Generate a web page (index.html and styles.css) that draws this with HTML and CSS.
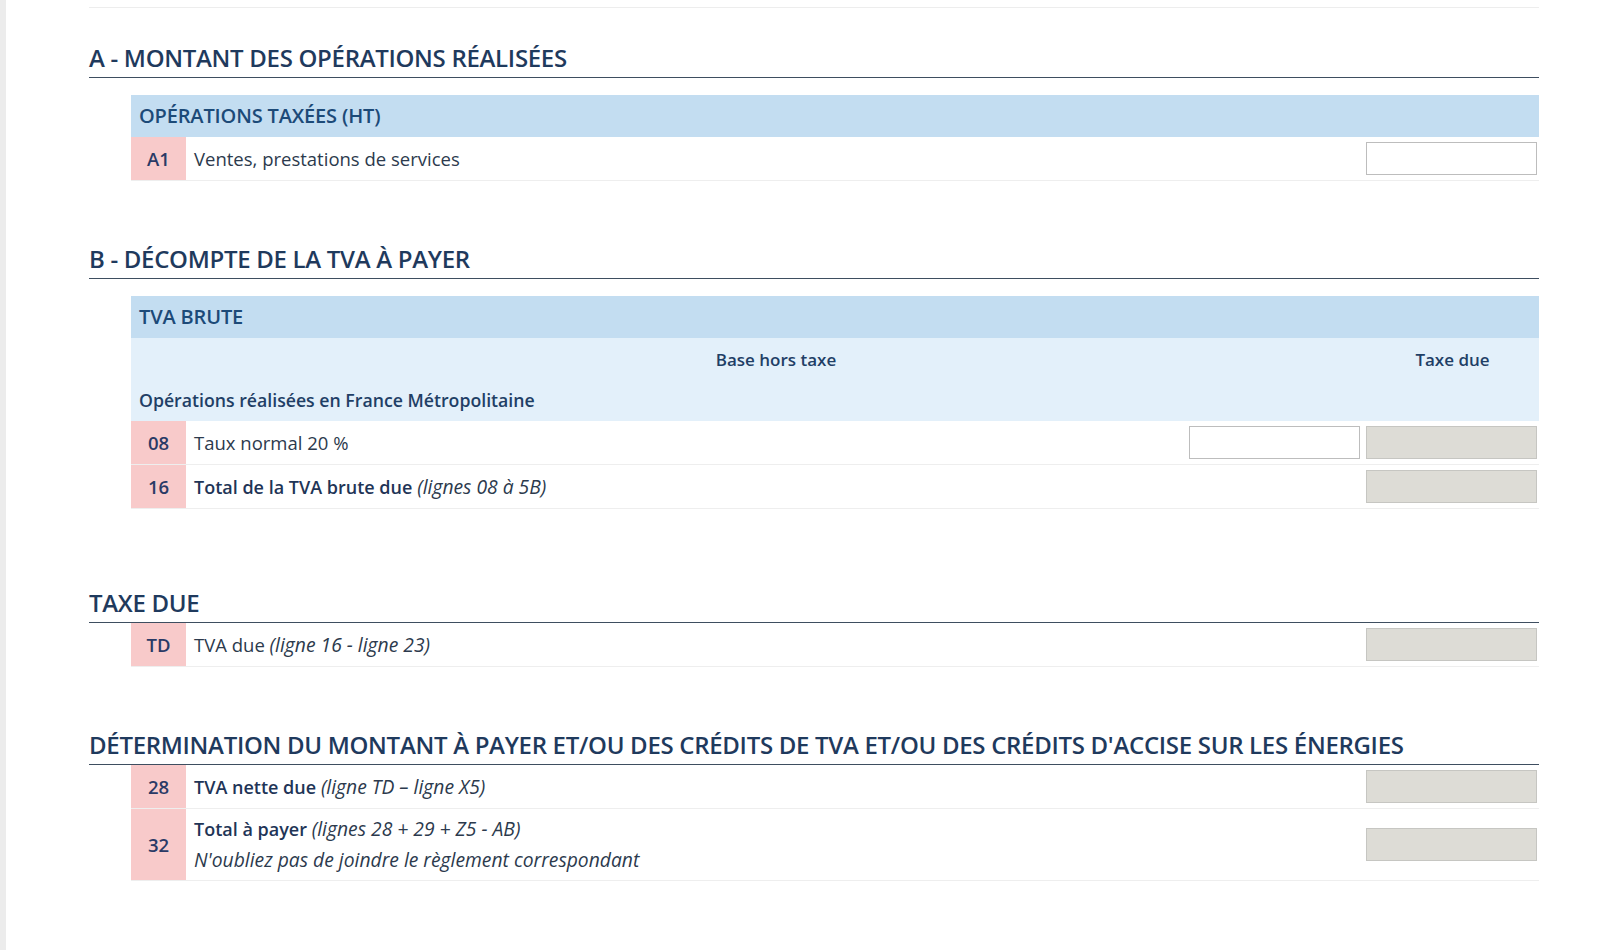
FILE: index.html
```html
<!DOCTYPE html>
<html lang="fr">
<head>
<meta charset="utf-8">
<title>Déclaration TVA</title>
<link rel="stylesheet" href="styles.css">
</head>
<body>
<div class="page">
  <div class="content">
    <div class="topline"></div>

    <section class="section">
      <h2 class="sec-title">A - MONTANT DES OPÉRATIONS RÉALISÉES</h2>
      <div class="block">
        <div class="bar">OPÉRATIONS TAXÉES (HT)</div>
        <div class="row">
          <div class="code">A1</div>
          <div class="label"><span>Ventes, prestations de services</span></div>
          <div class="cells"><div class="field"></div></div>
        </div>
      </div>
    </section>

    <section class="section section-b">
      <h2 class="sec-title">B - DÉCOMPTE DE LA TVA À PAYER</h2>
      <div class="block">
        <div class="bar">TVA BRUTE</div>
        <div class="colhead">
          <div class="colhead-base">Base hors taxe</div>
          <div class="colhead-tax">Taxe due</div>
        </div>
        <div class="subhead">Opérations réalisées en France Métropolitaine</div>
        <div class="row">
          <div class="code">08</div>
          <div class="label"><span>Taux normal 20 %</span></div>
          <div class="cells"><div class="field"></div><div class="field field-off"></div></div>
        </div>
        <div class="row">
          <div class="code">16</div>
          <div class="label"><span><b>Total de la TVA brute due</b> <i>(lignes 08 à 5B)</i></span></div>
          <div class="cells"><div class="field field-off"></div></div>
        </div>
      </div>
    </section>

    <section class="section section-td">
      <h2 class="sec-title">TAXE DUE</h2>
      <div class="block block-flush">
        <div class="row">
          <div class="code">TD</div>
          <div class="label"><span>TVA due <i>(ligne 16 - ligne 23)</i></span></div>
          <div class="cells"><div class="field field-off"></div></div>
        </div>
      </div>
    </section>

    <section class="section section-last">
      <h2 class="sec-title">DÉTERMINATION DU MONTANT À PAYER ET/OU DES CRÉDITS DE TVA ET/OU DES CRÉDITS D'ACCISE SUR LES ÉNERGIES</h2>
      <div class="block block-flush">
        <div class="row">
          <div class="code">28</div>
          <div class="label"><span><b>TVA nette due</b> <i>(ligne TD – ligne X5)</i></span></div>
          <div class="cells"><div class="field field-off"></div></div>
        </div>
        <div class="row row-tall">
          <div class="code">32</div>
          <div class="label label-multi">
            <div><b>Total à payer</b> <i>(lignes 28 + 29 + Z5 - AB)</i></div>
            <div><i>N'oubliez pas de joindre le règlement correspondant</i></div>
          </div>
          <div class="cells"><div class="field field-off"></div></div>
        </div>
      </div>
    </section>
  </div>
</div>
</body>
</html>
```

FILE: styles.css
```css
html, body {
  margin: 0;
  padding: 0;
  background: #ffffff;
}

body {
  font-family: "Open Sans", "Noto Sans", "Liberation Sans", sans-serif;
  color: #2c3a4d;
}

.page {
  border-left: 6px solid #ececec;
  min-height: 950px;
  box-sizing: border-box;
  padding-left: 83px;
  padding-right: 61px;
}

.content {
  width: 100%;
}

.topline {
  height: 7px;
  border-bottom: 1px solid #ededed;
}

.section {
  margin-top: 34px;
}

.section + .section {
  margin-top: 60px;
}

.section.section-b {
  margin-top: 62px;
}

.section.section-td {
  margin-top: 78px;
}

.section.section-last {
  margin-top: 62px;
}

.sec-title {
  margin: 0;
  font-size: 24px;
  font-weight: 600;
  letter-spacing: -0.3px;
  line-height: 31px;
  color: #1f3a5d;
  padding-bottom: 4px;
  border-bottom: 1px solid #3e4e60;
  white-space: nowrap;
}

.block {
  margin-left: 42px;
  margin-top: 17px;
}

.block-flush {
  margin-top: 0;
}

.bar {
  background: #c3ddf1;
  height: 42px;
  line-height: 42px;
  padding-left: 8px;
  font-size: 20px;
  font-weight: 600;
  letter-spacing: -0.15px;
  color: #1c4a78;
}

.colhead {
  display: flex;
  background: #e3f0fa;
  height: 42px;
  align-items: center;
  font-size: 17px;
  font-weight: 600;
  color: #1f3f66;
}

.colhead-base {
  flex: 1;
  padding-left: 55px;
  text-align: center;
}

.colhead-tax {
  width: 173px;
  text-align: center;
}

.subhead {
  background: #e3f0fa;
  height: 41px;
  line-height: 41px;
  padding-left: 8px;
  font-size: 17.7px;
  font-weight: 600;
  color: #1f3f66;
}

.row {
  display: flex;
  align-items: stretch;
  min-height: 43px;
  border-bottom: 1px solid #eeeeee;
}

.row-tall {
  min-height: 70px;
}

.code {
  width: 55px;
  flex: none;
  background: #f8caca;
  display: flex;
  align-items: center;
  justify-content: center;
  font-size: 18.5px;
  font-weight: 600;
  color: #2a3a66;
}

.label {
  flex: 1;
  display: flex;
  align-items: center;
  padding-left: 8px;
  font-size: 18.5px;
  color: #2c3a4d;
}

.label b {
  font-size: 18px;
  font-weight: 600;
  color: #1f3557;
}

.label i {
  font-size: 19.3px;
  color: #2c3a4d;
}

.label-multi {
  flex-direction: column;
  align-items: flex-start;
  justify-content: center;
  line-height: 29.5px;
  padding-top: 5px;
  padding-bottom: 6px;
}

.cells {
  display: flex;
  align-items: center;
  gap: 6px;
  padding-right: 2px;
}

.field {
  width: 169px;
  height: 31px;
  border: 1px solid #bdbdbd;
  background: #ffffff;
}

.field-off {
  background: #dddcd6;
  border-color: #c6c6c2;
}
```
